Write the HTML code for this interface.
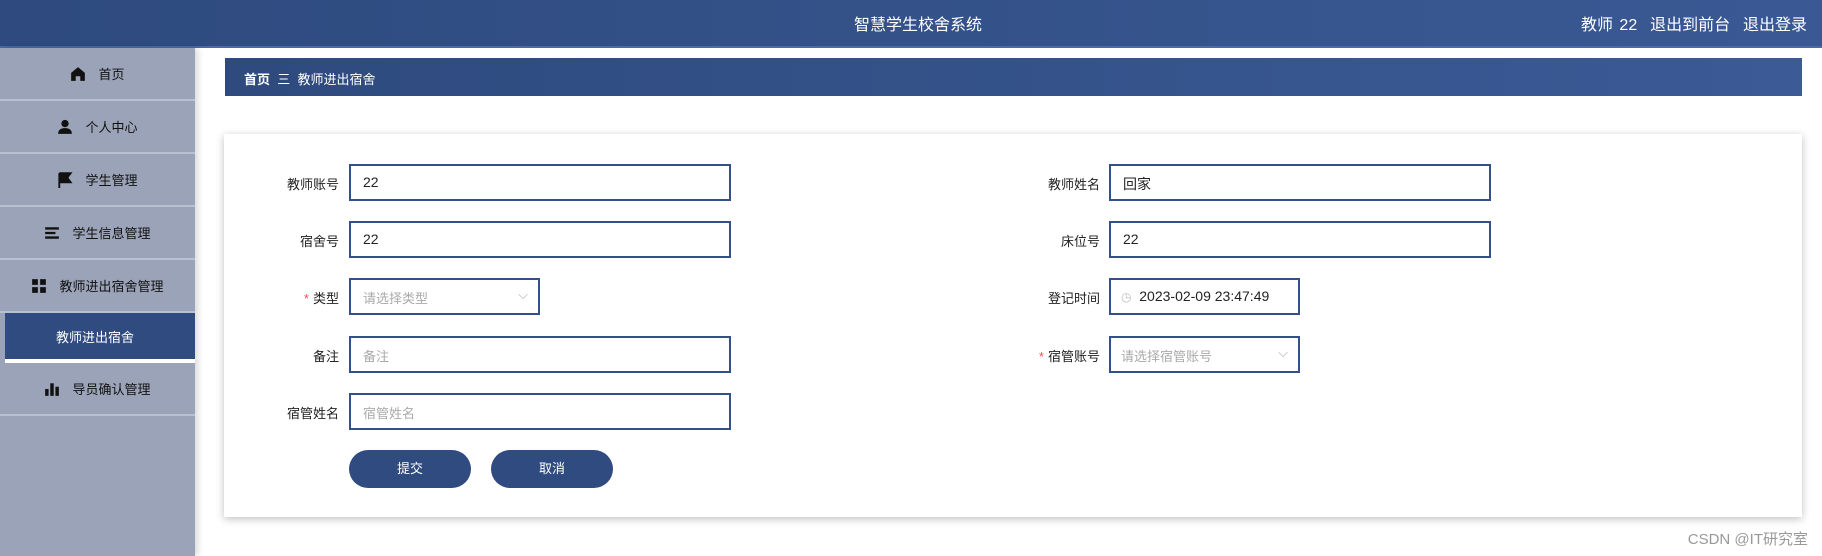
<!DOCTYPE html>
<html><head><meta charset="utf-8"><style>
*{margin:0;padding:0;box-sizing:border-box}
body{width:1822px;height:556px;overflow:hidden;background:#fff;font-family:"Liberation Sans","Noto Sans CJK SC",sans-serif;position:relative}
.hd{position:absolute;left:0;top:0;width:1822px;height:48px;background:linear-gradient(90deg,#2e4a7e,#3a5994);border-bottom:2px solid #4a6aa8}
.hd .t{position:absolute;left:0;width:1836px;text-align:center;top:11px;color:#fff;font-size:16px}
.hd .r{position:absolute;right:15px;top:11px;color:#fff;font-size:16px;word-spacing:2px}
.sb{position:absolute;left:0;top:48px;width:195px;height:508px;background:#9ba3b8;box-shadow:3px 0 6px rgba(0,0,0,.15)}
.it{height:53px;border-bottom:2px solid #b9c0d0;display:flex;align-items:center;justify-content:center;font-size:13px;color:#111;gap:12px}
.it svg{width:16px;height:16px}
.act{height:50px;margin-left:5px;background:#2f4b80;color:#fff;border-bottom:4px solid #fff;display:flex;align-items:center;justify-content:center;font-size:13px;padding-right:10px}
.bc{position:absolute;left:225px;top:58px;width:1577px;height:38px;background:linear-gradient(90deg,#2e4a7e,#3b5a96);color:#fff;font-size:13px;padding:11px 0 0 19px}
.card{position:absolute;left:224px;top:134px;width:1578px;height:383px;background:#fff;box-shadow:0 2px 8px rgba(0,0,0,.25)}
.lb{position:absolute;font-size:13px;color:#222;text-align:right;width:120px}
.in{position:absolute;height:37px;border:2px solid #34508a;font-size:14px;color:#222;padding:8px 12px;background:#fff}
.ph{color:#aaa;font-size:13px}
.st{color:#e55;margin-right:4px}
.btn{position:absolute;top:450px;height:38px;width:122px;border-radius:19px;background:#2f4b80;color:#fff;font-size:13px;text-align:center;line-height:38px}
.wm{position:absolute;right:14px;top:528px;color:#999;font-size:15px}
</style></head><body>
<div class="hd"><div class="t">智慧学生校舍系统</div><div class="r">教师 22&nbsp; 退出到前台&nbsp; 退出登录</div></div>
<div class="sb">
<div class="it"><svg viewBox="0 0 14 14"><path d="M7 1L1 6v7h4V9h4v4h4V6z" fill="#111"/></svg>首页</div>
<div class="it"><svg viewBox="0 0 14 14"><circle cx="7" cy="4" r="3.2" fill="#111"/><path d="M1 13c0-4 3-5 6-5s6 1 6 5z" fill="#111"/></svg>个人中心</div>
<div class="it"><svg viewBox="0 0 14 14"><path d="M2 1v13M2 1h10l-3 4 3 4H2" fill="#111" stroke="#111" stroke-width="1.6"/></svg>学生管理</div>
<div class="it"><svg viewBox="0 0 14 14"><path d="M1 3h12M1 7h9M1 11h12" stroke="#111" stroke-width="2"/></svg>学生信息管理</div>
<div class="it"><svg viewBox="0 0 14 14"><rect x="1" y="1" width="5" height="5" fill="#111"/><rect x="8" y="1" width="5" height="5" fill="#111"/><rect x="1" y="8" width="5" height="5" fill="#111"/><rect x="8" y="8" width="5" height="5" fill="#111"/></svg>教师进出宿舍管理</div>
<div class="act">教师进出宿舍</div>
<div class="it"><svg viewBox="0 0 14 14"><rect x="1" y="7" width="3" height="6" fill="#111"/><rect x="5.5" y="2" width="3" height="11" fill="#111"/><rect x="10" y="5" width="3" height="8" fill="#111"/></svg>导员确认管理</div>
</div>
<div class="bc"><b>首页</b>&nbsp; 三&nbsp; 教师进出宿舍</div>
<div class="card"></div>
<div class="lb" style="left:219px;top:174px">教师账号</div>
<div class="in" style="left:349px;top:164px;width:382px">22</div>
<div class="lb" style="left:219px;top:231px">宿舍号</div>
<div class="in" style="left:349px;top:221px;width:382px">22</div>
<div class="lb" style="left:219px;top:288px"><span class="st">*</span>类型</div>
<div class="in ph" style="left:349px;top:278px;width:191px">请选择类型<span style="position:absolute;right:10px;top:7px;color:#aaa">⌵</span></div>
<div class="lb" style="left:219px;top:346px">备注</div>
<div class="in ph" style="left:349px;top:336px;width:382px">备注</div>
<div class="lb" style="left:219px;top:403px">宿管姓名</div>
<div class="in ph" style="left:349px;top:393px;width:382px">宿管姓名</div>
<div class="btn" style="left:349px">提交</div>
<div class="btn" style="left:491px">取消</div>
<div class="lb" style="left:980px;top:174px">教师姓名</div>
<div class="in" style="left:1109px;top:164px;width:382px">回家</div>
<div class="lb" style="left:980px;top:231px">床位号</div>
<div class="in" style="left:1109px;top:221px;width:382px">22</div>
<div class="lb" style="left:980px;top:288px">登记时间</div>
<div class="in" style="left:1109px;top:278px;width:191px;padding-left:10px"><span style="color:#bbb;font-size:12px">◷</span>&nbsp; 2023-02-09 23:47:49</div>
<div class="lb" style="left:980px;top:346px"><span class="st">*</span>宿管账号</div>
<div class="in ph" style="left:1109px;top:336px;width:191px;padding-left:10px">请选择宿管账号<span style="position:absolute;right:10px;top:7px;color:#aaa">⌵</span></div>
<div class="wm">CSDN @IT研究室</div>
</body></html>
